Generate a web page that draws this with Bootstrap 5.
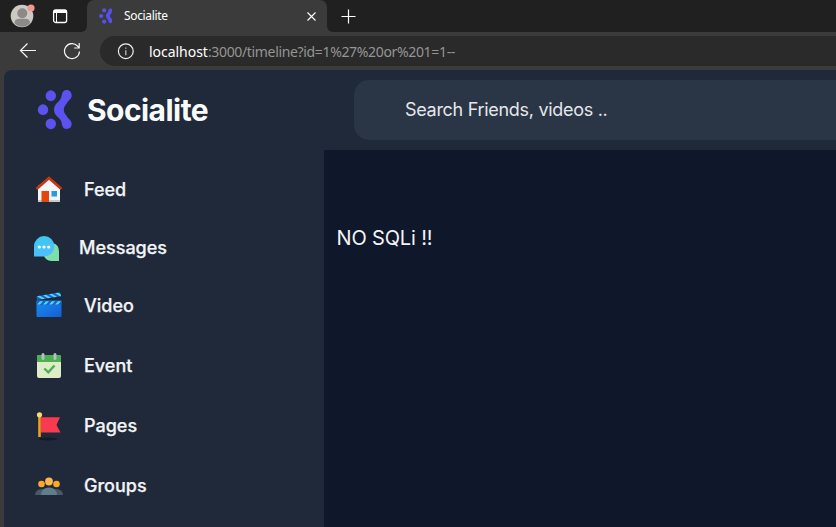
<!DOCTYPE html>
<html lang="en">
<head>
<meta charset="utf-8">
<meta name="viewport" content="width=device-width, initial-scale=1">
<title>Socialite</title>
<link href="https://cdn.jsdelivr.net/npm/bootstrap@5.3.0/dist/css/bootstrap.min.css" rel="stylesheet">
<style>
html, body { height: 100%; }
body { background: #3b3b3b; font-family: Inter, sans-serif; color: #f3f4f6; }
svg { display: block; flex: none; }
.browser { height: 70px; font-family: "Noto Sans", "Open Sans", sans-serif; }
.tabstrip { height: 32px; background: #3b3b3b; }
.tabs-left { width: 87px; background: #202020; border-bottom-right-radius: 6px; padding-left: 10px; }
.tab-wrap { background: #202020; width: 240px; }
.tab-on { background: #3b3b3b; border-radius: 7px 7px 0 0; padding: 0 10px 0 12px; }
.tab-title { font-size: 12px; letter-spacing: -.35px; margin-left: 11px; color: #fff; }
.tabs-right { background: #202020; border-bottom-left-radius: 6px; padding-left: 14px; }
.toolbar { height: 38px; padding-left: 19px; }
.reload { margin-left: 26px; }
.address { height: 30px; background: #2a2a2a; border-radius: 15px 0 0 15px; margin-left: 19px; padding-left: 17px; }
.url { font-size: 14px; margin-left: 15px; color: #959595; white-space: nowrap; letter-spacing: -.34px; }
.url b { font-weight: 400; color: #fff; letter-spacing: -.03px; }
.page { height: 457px; margin-left: 4px; background: #1f293a; border-top-left-radius: 8px; }
.brandbar { height: 80px; }
.brand { width: 350px; padding-left: 33px; }
.brand-name { font-size: 30px; font-weight: 700; letter-spacing: -.55px; margin-left: 14px; color: #f9fafb; line-height: 40px; }
.search { height: 60px; background: #2a3545; border-radius: 15px 0 0 15px; padding: 0 0 2px 51px; font-size: 18px; letter-spacing: -.3px; color: #e5e7eb; }
.side { width: 320px; padding: 10px 0 0 30px; }
.side a { height: 60px; color: #f3f4f6; font-size: 18px; font-weight: 500; letter-spacing: 0; text-decoration: none; gap: 20px; }
.side a span { padding-bottom: 2px; -webkit-text-stroke: .25px; }
.side a.msg { height: 56px; gap: 16px; margin-left: -1px; }
.content { background: #0f172a; padding: 73px 0 0 12.500px; }
.result { font-size: 20px; line-height: 30px; letter-spacing: -.15px; }
</style>
</head>
<body class="overflow-hidden">
<header class="browser">
  <div class="tabstrip d-flex">
    <div class="tabs-left d-flex align-items-center">
      <svg width="26" height="32" viewBox="0 0 26 32"><circle cx="12" cy="16" r="11.300" fill="#cdcac6"/><circle cx="12.300" cy="13.200" r="5" fill="#8c8986"/><path d="M4.500 23c0-4 4-4.200 8-4.200s7.500.2 7.500 4.200c-4 5-11.500 5-15.500 0z" fill="#8c8986"/><circle cx="21" cy="8" r="3.600" fill="#f5978d"/></svg>
      <svg class="ms-3" width="18" height="18" viewBox="0 0 18 18" fill="none" stroke="#fff"><rect x="1.600" y="3" width="13" height="12.500" rx="2" stroke-width="1.300"/><path d="M2 4.500h12.500" stroke-width="3"/><path d="M4.500 6v9"/></svg>
    </div>
    <div class="tab-wrap">
      <div class="tab-on h-100 d-flex align-items-center">
        <svg width="14" height="16" viewBox="0 0 35 40" fill="#5850ec"><circle cx="13" cy="6" r="5.300"/><circle cx="5.500" cy="20" r="5.300"/><circle cx="13" cy="34" r="5.300"/><path d="M28.500 5.500q-.5 6-4 9-5 5 0 10 3.500 3 4 9" fill="none" stroke="#5850ec" stroke-width="9" stroke-linecap="round"/></svg>
        <span class="tab-title">Socialite</span>
        <svg class="ms-auto" width="11" height="12" viewBox="0 0 11 12" stroke="#fff" stroke-width="1.100"><path d="M1.500 2.500l8 8m0-8l-8 8"/></svg>
      </div>
    </div>
    <div class="tabs-right flex-grow-1 d-flex align-items-center">
      <svg width="15" height="15" viewBox="0 0 15 15" stroke="#fff" stroke-width="1.200"><path d="M.5 7.500h14M7.500.5v14"/></svg>
    </div>
  </div>
  <div class="toolbar d-flex align-items-center">
    <svg width="18" height="18" viewBox="0 0 18 18" fill="none" stroke="#f5f5f5" stroke-width="1.200"><path d="M17 8.500H1.500M8.500 1.500l-7 7 7 7"/></svg>
    <svg class="reload" width="18" height="18" viewBox="0 0 18 18" fill="none" stroke="#f5f5f5" stroke-width="1.200"><path d="M16.500 9.500a7.500 7.500 0 1 1-2-5.500l2 2M16.200 1v5h-5"/></svg>
    <div class="address flex-grow-1 d-flex align-items-center">
      <svg width="17" height="17" viewBox="0 0 17 17" fill="none" stroke="#f0f0f0"><circle cx="8.800" cy="8.200" r="7.400" stroke-width="1.200"/><path d="M8.800 7.200v5M8.800 4.400v1.400" stroke-width="1.300" stroke="#bbb"/></svg>
      <span class="url"><b>localhost</b>:3000/timeline?id=1%27%20or%201=1--</span>
    </div>
  </div>
</header>
<div class="page d-flex flex-column overflow-hidden">
  <div class="brandbar d-flex align-items-center">
    <div class="brand d-flex align-items-center flex-shrink-0">
      <svg width="36" height="40" viewBox="0 0 36 40" fill="#5b52ef"><ellipse cx="13.800" cy="5.700" rx="5.200" ry="5.400"/><ellipse cx="6" cy="19.700" rx="5.200" ry="5.400"/><ellipse cx="13.800" cy="33.800" rx="5.200" ry="5.400"/><path d="M29.500 0c3.500 0 5.200 2.600 5.200 5.500 0 3.600-3.200 4.600-5 8-1.200 2-2.900 3-2.900 6.300s1.700 4.300 2.900 6.300c1.800 3.400 5 4.400 5 8 0 3.200-2 4.900-5.200 4.900-4.300 0-4.300-4.300-5.300-7.700-1-3.600-7.200-5.300-7.200-11.500s6.200-8.400 7.200-12.200c.9-3.500 1-7.600 5.300-7.600z"/></svg>
      <span class="brand-name">Socialite</span>
    </div>
    <div class="search flex-grow-1 d-flex align-items-center">Search Friends, videos ..</div>
  </div>
  <div class="d-flex flex-grow-1">
    <nav class="side d-flex flex-column flex-shrink-0">
      <a href="#" class="d-flex align-items-center">
        <svg width="30" height="30" viewBox="0 0 30 30"><path d="M4 11L15 3l11 9v15H4z" fill="#f5f6f8"/><path d="M4 25h22v2H4z" fill="#c3cad3"/><path d="M2.500 14L15 3l12.500 11" fill="none" stroke="#c9370e" stroke-width="2.800"/><path d="M7.500 16H15v11H7.500z" fill="#e2480d"/><path d="M17.500 16H23v5.500h-5.500z" fill="#279bdf"/></svg>
        <span>Feed</span>
      </a>
      <a href="#" class="msg d-flex align-items-center">
        <svg width="30" height="30" viewBox="0 0 30 30"><defs><linearGradient id="chat" x2=".5" y2="1"><stop stop-color="#35cdea"/><stop offset="1" stop-color="#50bdff"/></linearGradient></defs><path d="M20 10a8.800 8.800 0 0 1 6 8.500V28H18a8 8 0 0 1-7-5z" fill="#7edfab"/><path d="M1 23.500V13.500A10.200 10.200 0 1 1 11.200 23.500z" fill="url(#chat)"/><g fill="#fff"><circle cx="6.300" cy="14" r="1.600"/><circle cx="11" cy="14" r="1.600"/><circle cx="15.700" cy="14" r="1.600"/></g></svg>
        <span>Messages</span>
      </a>
      <a href="#" class="d-flex align-items-center">
        <svg width="30" height="30" viewBox="0 0 30 30"><defs><linearGradient id="clap" x2="1" y2="1"><stop stop-color="#188cf0"/><stop offset="1" stop-color="#155fd4"/></linearGradient></defs><path d="M2.500 9.500h25V25q0 1-1 1h-23q-1 0-1-1z" fill="url(#clap)"/><path d="M2.500 5.200L26 1.300l1 3.900L3 9z" fill="#1763c9"/><path d="M2.500 10h25v4h-25z" fill="#1763c9"/><path d="M3 5.200l5 3 3-.500-5-3zM9 4.200l5 3 3-.500-5-3zM15 3.200l5 3 3-.500-5-3zM21 2.200l5 3 1-.200-.500-2-2.500-1.300zM3 13.500l3-3.200h3l-3 3.200zM9 13.500l3-3.200h3l-3 3.200zM15 13.500l3-3.200h3l-3 3.200zM21 13.500l3-3.200h3l-3 3.200z" fill="#4fd5fa"/></svg>
        <span>Video</span>
      </a>
      <a href="#" class="d-flex align-items-center">
        <svg width="30" height="30" viewBox="0 0 30 30"><rect x="3" y="4" width="24" height="23" rx="2" fill="#dcedc8"/><path d="M5 4h20q2 0 2 2v5H3V6q0-2 2-2z" fill="#4caf50"/><path d="M9 3.500v4M21 3.500v4" stroke="#b4bec5" stroke-width="3" stroke-linecap="round"/><path d="M10.300 17.500l4 3.800 6.200-6.800" fill="none" stroke="#4caf50" stroke-width="2.400"/></svg>
        <span>Event</span>
      </a>
      <a href="#" class="d-flex align-items-center">
        <svg width="30" height="30" viewBox="0 0 30 30"><ellipse cx="14" cy="28" rx="9.500" ry="1.500" fill="#141b28"/><path d="M7 6.200h19L22.500 14l4 7.500H7z" fill="#f93a4f"/><path d="M5.500 4v22" stroke="#eea216" stroke-width="2.600"/><circle cx="5.500" cy="3.800" r="2.600" fill="#ffd677"/></svg>
        <span>Pages</span>
      </a>
      <a href="#" class="d-flex align-items-center">
        <svg width="30" height="30" viewBox="0 0 30 30"><path d="M1 24q.5-6 7-6h14q6.500 0 7 6z" fill="#455a64"/><path d="M7 24q.5-7.500 8-7.500t8 7.500z" fill="#5f7d8b"/><circle cx="7.500" cy="13" r="3.300" fill="#ffa726"/><circle cx="22.500" cy="13" r="3.300" fill="#ffa726"/><circle cx="15" cy="10.500" r="3.900" fill="#ffb74d"/></svg>
        <span>Groups</span>
      </a>
    </nav>
    <main class="content flex-grow-1"><div class="result">NO SQLi !!</div></main>
  </div>
</div>
<script src="https://cdn.jsdelivr.net/npm/bootstrap@5.3.0/dist/js/bootstrap.bundle.min.js"></script>
</body>
</html>
